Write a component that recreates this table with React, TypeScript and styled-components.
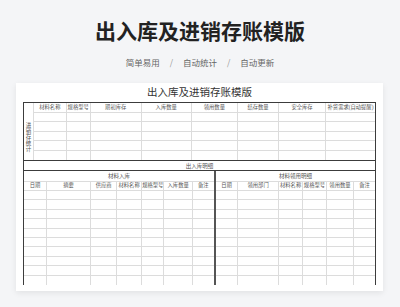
import React from "react";
import styled, { createGlobalStyle } from "styled-components";

const GlobalStyle = createGlobalStyle`
  html, body {
    margin: 0;
    padding: 0;
    background: #f4f5f7;
  }
  * {
    box-sizing: border-box;
  }
`;

const Page = styled.div`
  width: 400px;
  height: 307px;
  background: #f4f5f7;
  font-family: "Noto Sans CJK SC", "Noto Sans", sans-serif;
  overflow: hidden;
`;

const Header = styled.header`
  padding-top: 18px;
  display: flex;
  flex-direction: column;
  align-items: center;
`;

const Title = styled.h1`
  margin: 0;
  font-size: 21px;
  line-height: 24px;
  font-weight: 700;
  color: #222;
`;

const Tagline = styled.div`
  margin-top: 14px;
  display: flex;
  gap: 10px;
  font-size: 8.5px;
  line-height: 12px;
  color: #666;
`;

const Slash = styled.span`
  color: #999;
`;

const Card = styled.section`
  margin: 15px 0 0 16px;
  width: 367px;
  height: 208px;
  background: #fff;
  box-shadow: 0 2px 6px rgba(0, 0, 0, 0.08);
  padding: 0 7px;
`;

const SheetTitle = styled.div`
  height: 19px;
  line-height: 19px;
  text-align: center;
  font-family: "Liberation Serif", "Noto Sans CJK SC", serif;
  font-size: 10.5px;
  color: #333;
`;

const Sheet = styled.div`
  width: 353px;
  border: 1px solid #3c3c3c;
  border-bottom: none;
`;

const StockGrid = styled.div`
  display: grid;
  grid-template-columns: 10px 32.7px 24px 51px 50px 46.3px 41px 47px 49px;
  grid-template-rows: repeat(6, 9.5px);
`;

const Cell = styled.div<{ $last?: boolean; $bottom?: boolean }>`
  border-right: ${(p) => (p.$last ? "none" : "1px solid #dcdcdc")};
  border-bottom: ${(p) => (p.$bottom ? "none" : "1px solid #dcdcdc")};
  font-size: 5.3px;
  line-height: 1;
  color: #555;
  display: flex;
  align-items: center;
  justify-content: center;
  white-space: nowrap;
  overflow: hidden;
  font-family: "Liberation Serif", "Noto Sans CJK SC", serif;
`;

const SideLabel = styled(Cell)`
  grid-row: 1 / span 6;
  padding-top: 10px;
  border-bottom: none;
  flex-direction: column;
  font-size: 5.5px;
  line-height: 6px;
`;

const Band = styled.div`
  height: 11px;
  border-top: 1px solid #3c3c3c;
  border-bottom: 1px solid #3c3c3c;
  display: flex;
  align-items: center;
  justify-content: center;
  font-size: 5.5px;
  color: #555;
  font-family: "Liberation Serif", "Noto Sans CJK SC", serif;
`;

const Ledgers = styled.div`
  display: flex;
`;

const Ledger = styled.div<{ $cols: string; $divider?: boolean }>`
  display: grid;
  grid-template-columns: ${(p) => p.$cols};
  grid-template-rows: 11px 9px repeat(10, 9.4px);
  border-right: ${(p) => (p.$divider ? "2px solid #555" : "none")};
`;

const LedgerTitle = styled(Cell)`
  grid-column: 1 / -1;
  border-right: none;
  font-size: 5.5px;
  padding-top: 1px;
`;

const stockHeads = [
  "材料名称",
  "规格型号",
  "期初库存",
  "入库数量",
  "领用数量",
  "结存数量",
  "安全库存",
  "补货需求(自动提醒)",
];

const inHeads = ["日期", "摘要", "供应商", "材料名称", "规格型号", "入库数量", "备注"];
const outHeads = ["日期", "领用部门", "材料名称", "规格型号", "领用数量", "备注"];

const Body = ({ cols, rows }: { cols: number; rows: number }) => (
  <>
    {Array.from({ length: rows * cols }).map((_, i) => (
      <Cell
        key={i}
        $last={i % cols === cols - 1}
        $bottom={Math.floor(i / cols) === rows - 1}
      />
    ))}
  </>
);

const LedgerTable = ({
  title,
  heads,
  cols,
  divider,
}: {
  title: string;
  heads: string[];
  cols: string;
  divider?: boolean;
}) => (
  <Ledger $cols={cols} $divider={divider}>
    <LedgerTitle>{title}</LedgerTitle>
    {heads.map((h, i) => (
      <Cell key={h + i} $last={i === heads.length - 1}>
        {h}
      </Cell>
    ))}
    <Body cols={heads.length} rows={10} />
  </Ledger>
);

export default function App() {
  return (
    <Page>
      <GlobalStyle />
      <Header>
        <Title>出入库及进销存账模版</Title>
        <Tagline>
          <span>简单易用</span>
          <Slash>/</Slash>
          <span>自动统计</span>
          <Slash>/</Slash>
          <span>自动更新</span>
        </Tagline>
      </Header>
      <Card>
        <SheetTitle>出入库及进销存账模版</SheetTitle>
        <Sheet>
          <StockGrid>
            <SideLabel>
              {"进销存统计".split("").map((c) => (
                <span key={c}>{c}</span>
              ))}
            </SideLabel>
            {stockHeads.map((h, i) => (
              <Cell key={h} $last={i === stockHeads.length - 1}>
                {h}
              </Cell>
            ))}
            <Body cols={8} rows={5} />
          </StockGrid>
          <Band>出入库明细</Band>
          <Ledgers>
            <LedgerTable
              title="材料入库"
              heads={inHeads}
              cols="23px 44.2px 26px 24.8px 22.5px 28.3px 21.2px"
              divider
            />
            <LedgerTable
              title="材料领用明细"
              heads={outHeads}
              cols="22.3px 40.7px 24.3px 23.4px 27.6px 20.7px"
            />
          </Ledgers>
        </Sheet>
      </Card>
    </Page>
  );
}
